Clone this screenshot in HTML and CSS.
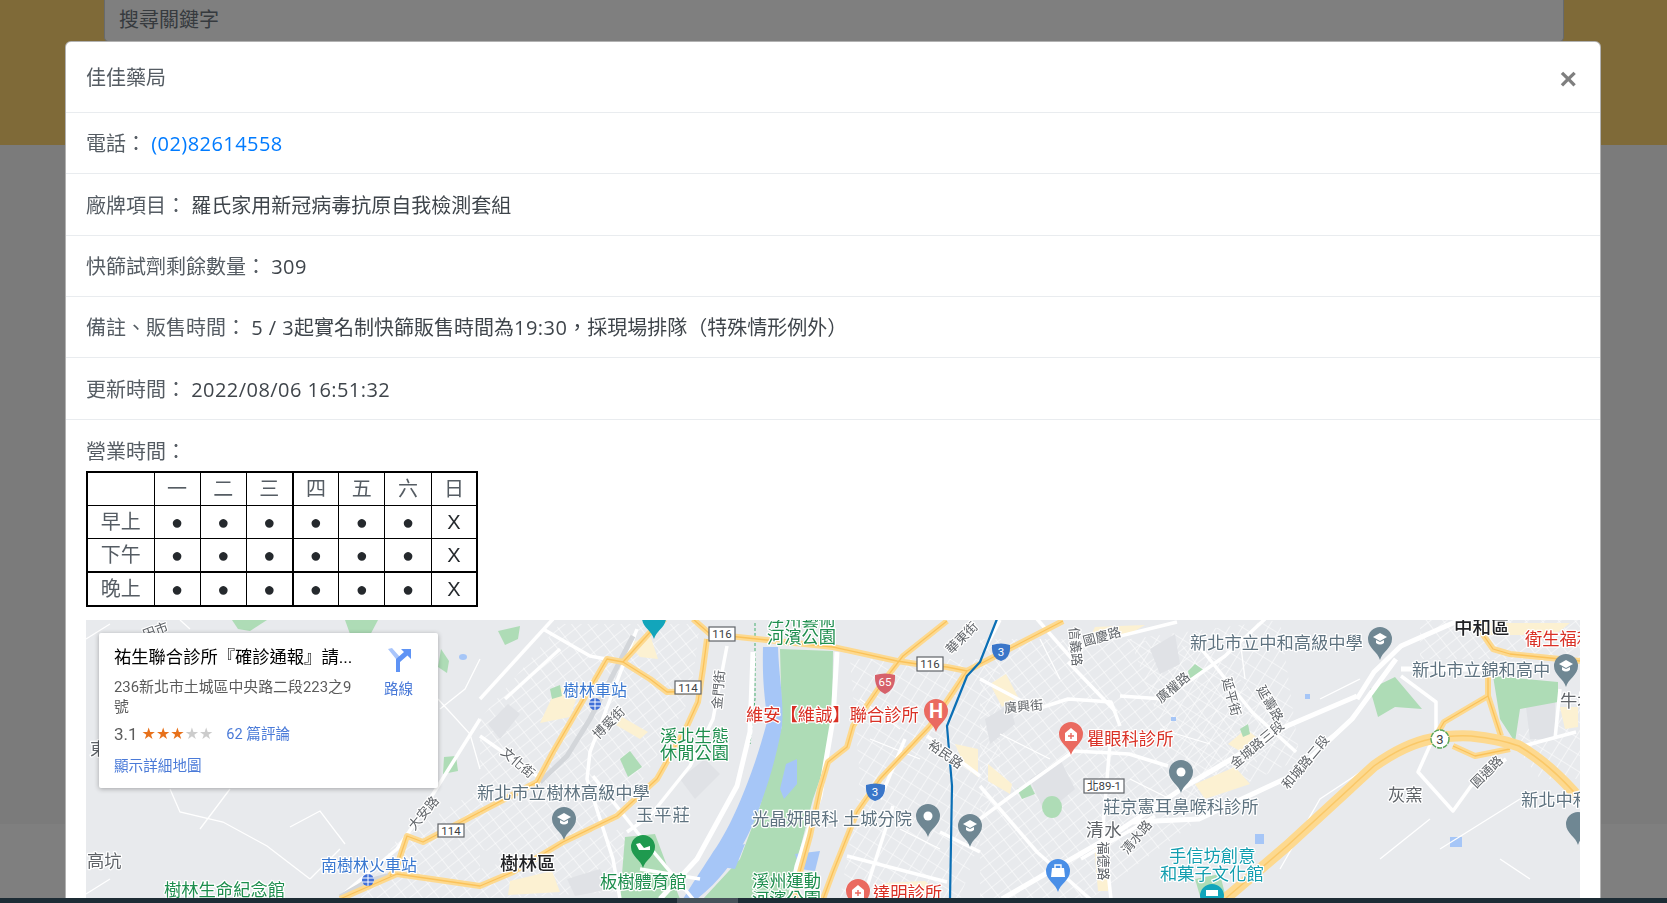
FILE: index.html
```html
<!DOCTYPE html>
<html lang="zh-Hant">
<head>
<meta charset="utf-8">
<title>佳佳藥局</title>
<link rel="stylesheet" href="styles.css">
</head>
<body>
<div class="page">
  <header class="top">
    <div class="search">搜尋關鍵字</div>
  </header>
  <main class="content"></main>
  <footer class="foot"></footer>
</div>
<div class="backdrop"></div>
<section class="modal">
  <div class="modal-head">
    <h5 class="modal-title">佳佳藥局</h5>
    <button class="close" type="button">×</button>
  </div>
  <div class="row">電話<span class="p">：</span> <a class="tel num" href="#">(02)82614558</a></div>
  <div class="row">廠牌項目<span class="p">：</span> <span class="val">羅氏家用新冠病毒抗原自我檢測套組</span></div>
  <div class="row">快篩試劑剩餘數量<span class="p">：</span> <span class="val num">309</span></div>
  <div class="row">備註<span class="p">、</span>販售時間<span class="p">：</span> <span class="val"><span class="num">5 / 3</span>起實名制快篩販售時間為<span class="num">19:30</span><span class="p">，</span>採現場排隊（特殊情形例外）</span></div>
  <div class="row">更新時間<span class="p">：</span> <span class="val num">2022/08/06 16:51:32</span></div>
  <div class="hours">
    <div class="hours-label">營業時間<span class="p">：</span></div>
    <table class="week">
      <colgroup><col class="c0"><col class="c"><col class="c"><col class="c"><col class="c"><col class="c"><col class="c"><col class="c"></colgroup>
      <tr><td></td><td>一</td><td>二</td><td>三</td><td>四</td><td>五</td><td>六</td><td>日</td></tr>
      <tr><td>早上</td><td class="d">●</td><td class="d">●</td><td class="d">●</td><td class="d">●</td><td class="d">●</td><td class="d">●</td><td class="d">X</td></tr>
      <tr><td>下午</td><td class="d">●</td><td class="d">●</td><td class="d">●</td><td class="d">●</td><td class="d">●</td><td class="d">●</td><td class="d">X</td></tr>
      <tr><td>晚上</td><td class="d">●</td><td class="d">●</td><td class="d">●</td><td class="d">●</td><td class="d">●</td><td class="d">●</td><td class="d">X</td></tr>
    </table>
    <div class="map">
      <svg class="map-svg" viewBox="86 621 1494 300" width="1494" height="300" xmlns="http://www.w3.org/2000/svg">
        <defs>
          <pattern id="grid" width="13" height="10" patternUnits="userSpaceOnUse" patternTransform="rotate(-38)">
            <path d="M0 0H13M0 0V10" stroke="#fff" stroke-width="1.1" fill="none"/>
          </pattern>
          <pattern id="gridb" width="11" height="14" patternUnits="userSpaceOnUse" patternTransform="rotate(32)">
            <path d="M0 0H11M0 0V14" stroke="#fff" stroke-width="1.1" fill="none"/>
          </pattern>
          <path id="pin" d="M0 21C-2 13-12 9-12 0A12 12 0 1 1 12 0C12 9 2 13 0 21Z"/>
          <g id="cap"><path d="M-7-2L0-6 7-2 0 2Z" fill="#fff"/><path d="M-4 1V4Q0 7 4 4V1L0 3Z" fill="#fff"/></g>
          <g id="arts">
            <path d="M693 620L710 635 757 640 833 648 897 662 917 665 947 668 967 672"/>
            <path d="M947 622L903 657 883 683 853 727 847 748 828 763 820 790 810 837 800 873 795 900"/>
            <path d="M1063 622L980 665 967 672 953 693 930 727 880 780 857 813 833 873 823 900"/>
            <path d="M707 640L703 670 698 703 687 727 657 780 617 817 563 843 513 873 480 887 397 875 340 900"/>
            <path d="M480 813L423 843 407 837 397 867 390 877"/>
            <path d="M480 813L537 783 553 753 607 660 623 663 650 680 667 693 700 692"/>
            <path d="M623 663L653 630 665 620"/>
            <path d="M1480 621L1484 637 1493 650 1510 655 1580 662"/>
            <path d="M1488 663L1488 697 1444 723 1436 737"/>
            <path d="M1488 697L1501 737"/>
            <path d="M1453 747L1475 757 1510 750"/>
          </g>
          <path id="fw" d="M1225 900L1287 847 1374 767Q1405 745 1431 740 1450 736 1471 737 1500 740 1519 747 1550 765 1580 800"/>
        </defs>
        <rect class="land" x="86" y="621" width="1494" height="300"/>

        <!-- neighbourhood blocks -->
        <path class="block" d="M480 720L560 625H700L690 700 620 820 520 860 480 850Z"/>
        <path class="block" d="M480 870L620 830 680 890 480 900Z"/>
        <path class="block2" d="M850 660H1000L1000 780 960 900H840L860 780Z"/>
        <path class="block" d="M980 640H1130L1210 650 1290 730 1200 820 1090 900H980Z"/>
        <path class="block2" d="M1130 640L1280 621 1300 760 1190 810Z"/>
        <path class="block" d="M1420 621H1580V660H1420Z"/>
        <path class="block2" d="M1510 740L1580 700V780H1540Z"/>
        <path class="block" d="M397 840L480 790V900H360Z"/>

        <!-- pale building / commerce zones -->
        <g class="commerce">
          <path d="M556 690L582 684 570 718 540 724Z"/>
          <path d="M628 645L650 636 658 660 640 658Z"/>
          <path d="M622 718L648 733 640 740 616 726Z"/>
          <path d="M955 745L978 750V778L965 768Z"/>
          <path d="M990 685L1006 675 1018 698 1002 708Z"/>
          <path d="M988 765L1012 785 1010 795 988 782Z"/>
          <path d="M1095 628L1145 626 1128 636 1090 638Z"/>
          <path d="M1195 785L1235 768 1250 785 1205 800Z"/>
          <path d="M1228 745L1246 730 1256 738 1240 752Z"/>
          <path d="M1094 845L1110 845 1108 892 1098 892Z"/>
          <path d="M1465 624L1570 624 1555 636 1480 636Z"/>
          <path d="M1560 708L1578 708V728L1565 730Z"/>
          <path d="M885 884L925 882 940 895H878Z"/>
          <path d="M510 882L552 872 560 893 508 896Z"/>
        </g>

        <!-- grey blocks -->
        <g class="greyblock">
          <path d="M488 725L508 705 520 715 500 740Z"/>
          <path d="M680 780L705 760 720 775 695 800Z"/>
          <path d="M985 720L1010 705 1015 725 990 745Z"/>
          <path d="M1150 650L1175 635 1180 665 1160 675Z"/>
          <path d="M1030 780L1060 760 1075 790 1045 815Z"/>
          <path d="M1525 700H1555V740H1530Z"/>
          <path d="M567 880L600 870 610 890 575 897Z"/>
        </g>

        <!-- parks -->
        <g class="park">
          <path d="M780 650L833 652 832 727 827 760 813 800 800 850 793 900H703L740 860 760 807 782 727Z"/>
          <path d="M232 621H267L250 632 238 630Z"/>
          <path d="M345 621H378L368 640 350 635Z"/>
          <path d="M441 650L449 662 447 674 438 668Z"/>
          <path d="M444 758L456 757 458 772 443 775Z"/>
          <path d="M498 632L520 627 518 640 505 646Z"/>
          <path d="M620 760L630 752 642 768 628 778Z"/>
          <path d="M550 690L560 686 562 697 552 700Z"/>
          <path d="M1370 690L1395 678 1422 710 1395 708 1378 718Z"/>
          <path d="M1493 677L1558 683 1558 703 1520 710 1515 743 1500 720Z"/>
          <ellipse cx="1052" cy="808" rx="10" ry="11"/>
          <path d="M1195 665L1205 672 1190 682 1188 672Z"/>
          <path d="M1240 730L1248 725 1250 735 1243 738Z"/>
          <path d="M1017 790L1030 785 1035 795 1022 800Z"/>
          <path d="M1195 880L1220 875 1225 895 1200 897Z"/>
          <path d="M625 838L655 835 672 880 680 900H620Z"/>
        </g>
        <path class="dash" d="M755 624V700L750 745"/>

        <!-- water -->
        <path class="water" d="M763 648H778C779 680 784 700 782 727 776 760 768 785 760 807 752 830 735 870 697 900H683C695 880 705 866 713 853 730 830 752 780 767 723 766 700 762 690 763 648Z"/>
        <g class="water">
          <path d="M786 765L797 760 797 785 784 800 780 790Z"/>
          <path d="M725 850L745 845 735 870 722 868Z"/>
          <path d="M795 855L820 852 815 872 800 870Z"/>
          <ellipse cx="463" cy="658" rx="4" ry="3"/>
          <rect x="1255" y="835" width="9" height="10"/>
          <rect x="1450" y="838" width="12" height="10"/>
          <rect x="1305" y="695" width="5" height="5"/>
          <rect x="1171" y="718" width="5" height="4"/>
        </g>

        <!-- minor roads (curves, hill tracks) -->
        <g class="thin">
          <path d="M170 790L180 813 223 823 267 847 310 880"/>
          <path d="M290 828L320 812 345 845"/>
          <path d="M440 710L465 690 480 660M438 700L470 735 480 770"/>
          <path d="M86 895L110 880M310 880L340 850"/>
          <path d="M1280 870L1320 800 1380 760M1440 850L1520 800M1380 860L1430 820M1500 860L1530 880"/>
          <path d="M86 640L110 625M180 621L190 630M230 790L200 830"/>
          <path d="M1320 700L1360 680M1300 760L1340 730"/>
          <path d="M1240 640L1245 680M1160 730L1210 745M1130 780L1170 800"/>
          <path d="M1040 640L1060 680M1000 735L1050 760"/>
          <path d="M860 700L900 730M870 740L920 760M900 830L940 850"/>
        </g>

        <!-- white roads -->
        <g class="road">
          <path d="M553 620L480 700"/>
          <path d="M480 720L413 827 397 850 340 898"/>
          <path d="M543 630L590 657 623 663"/>
          <path d="M727 647L713 720 690 767 650 817 627 833"/>
          <path d="M637 630L590 753 587 780 613 860 620 900"/>
          <path d="M480 737L537 777"/>
          <path d="M593 777L637 833 693 900"/>
          <path d="M927 737L980 777"/>
          <path d="M893 807L863 900"/>
          <path d="M940 833L980 853"/>
          <path d="M847 857L947 883"/>
          <path d="M980 680L1037 710 1068 700 1111 703 1120 727"/>
          <path d="M1068 663L1116 713"/>
          <path d="M1037 620L1072 660"/>
          <path d="M1074 752L1129 755 1168 767"/>
          <path d="M1074 752L1011 797 980 820"/>
          <path d="M1199 647L1252 713 1296 753"/>
          <path d="M1120 697L1164 700 1225 657 1265 620"/>
          <path d="M1068 650L1177 623"/>
          <path d="M1111 733L1103 827 1111 900"/>
          <path d="M980 787L1037 853 1090 900"/>
          <path d="M1081 860L1155 817"/>
          <path d="M1401 677L1436 703 1436 733 1418 773 1453 812 1471 787 1506 760"/>
          <path d="M1523 747L1576 733"/>
          <path d="M1560 690L1555 740"/>
          <path d="M905 740L880 800"/>
          <path d="M1000 621L985 650"/>
          <path d="M560 650L505 700"/>
          <path d="M640 870L700 880"/>
        </g>
        <g class="road wide">
          <path d="M753 653L750 733 737 787 697 860 660 900"/>
          <path d="M837 653L833 720 820 797 797 867 790 900"/>
          <path d="M1357 697L1287 727 1186 787 1111 837 1002 900"/>
          <path d="M1396 660L1352 720 1291 777 1199 820 1133 823"/>
          <path d="M1462 620L1401 647 1374 673 1357 700"/>
          <path d="M1401 670L1488 670"/>
        </g>
        <path class="rail" d="M633 637L590 720 567 757 540 783"/>
        <path class="rail" d="M340 898L368 882 395 875"/>

        <!-- arterials -->
        <use class="art-base" href="#arts"/>
        <use class="art-core" href="#arts"/>
        <use class="fw-base" href="#fw"/>
        <use class="fw-core" href="#fw"/>

        <path class="metro" d="M997 620L980 663 967 677 947 727 952 787 950 900"/>

        <!-- shields -->
        <g class="shield">
          <rect x="709" y="628" width="26" height="14"/><text x="722" y="639">116</text>
          <rect x="917" y="658" width="26" height="14"/><text x="930" y="669">116</text>
          <rect x="675" y="682" width="26" height="13"/><text x="688" y="693">114</text>
          <rect x="438" y="825" width="26" height="13"/><text x="451" y="836">114</text>
          <rect x="1084" y="780" width="40" height="14"/><text x="1104" y="791">北89-1</text>
        </g>
        <g class="badge">
          <path d="M875 676Q885 673 895 676 896 690 885 695 874 690 875 676Z" fill="#d6616b"/><text x="885" y="687">65</text>
          <path d="M866 786Q875 783 885 786 886 799 875 802 865 799 866 786Z" fill="#3a76c9"/><text x="875" y="797">3</text>
          <path d="M992 646Q1001 643 1010 646 1011 659 1001 662 991 659 992 646Z" fill="#3a76c9"/><text x="1001" y="657">3</text>
          <circle cx="1440" cy="740" r="9" class="flower"/><text x="1440" y="745" class="dark">3</text>
        </g>

        <!-- station marks -->
        <g class="station">
          <circle cx="595" cy="705" r="6"/><path d="M589 703H601M589 707H601M595 699V711"/>
          <circle cx="368" cy="881" r="6"/><path d="M362 879H374M362 883H374M368 875V887"/>
        </g>

        <!-- pins -->
        <g transform="translate(654 619)" fill="#12a5bb"><use href="#pin"/></g>
        <g transform="translate(936 712)"><use href="#pin" fill="#ea6a60"/><text x="0" y="7" class="pin-h">H</text></g>
        <g transform="translate(564 820)"><use href="#pin" fill="#6f8793"/><use href="#cap"/></g>
        <g transform="translate(970 827)"><use href="#pin" fill="#6f8793"/><use href="#cap"/></g>
        <g transform="translate(1380 640)"><use href="#pin" fill="#6f8793"/><use href="#cap"/></g>
        <g transform="translate(1566 667)"><use href="#pin" fill="#6f8793"/><use href="#cap"/></g>
        <g transform="translate(928 817)"><use href="#pin" fill="#6f8793"/><circle r="4.5" fill="#fff"/></g>
        <g transform="translate(1181 773)"><use href="#pin" fill="#6f8793"/><circle r="4.5" fill="#fff"/></g>
        <g transform="translate(643 848)"><use href="#pin" fill="#1f9a4f"/><path d="M-7-3L-4 3H7V-1L1 1-3-4Z" fill="#fff"/></g>
        <g transform="translate(858 892)"><use href="#pin" fill="#ea6a60"/><path d="M-6-1L0-6 6-1V7H-6Z" fill="#fff"/><path d="M-3 2H3M0-1V5" stroke="#ea6a60" stroke-width="1.4"/></g>
        <g transform="translate(1071 735)"><use href="#pin" fill="#ea6a60"/><path d="M-6-1L0-6 6-1V7H-6Z" fill="#fff"/><path d="M-3 2H3M0-1V5" stroke="#ea6a60" stroke-width="1.4"/></g>
        <g transform="translate(1058 872)"><use href="#pin" fill="#4a8fe7"/><path d="M-6-3H6L7 6H-7Z" fill="#fff"/><path d="M-3-3V-6H3V-3" stroke="#fff" fill="none" stroke-width="1.4"/></g>
        <g transform="translate(1212 897)" fill="#12a5bb"><use href="#pin"/><rect x="-6" y="-6" width="12" height="6" fill="#fff"/></g>
        <g transform="translate(1578 825)"><use href="#pin" fill="#6f8793"/></g>

        <!-- labels -->
        <g class="lb">
          <text class="blue" x="563" y="697">樹林車站</text>
          <text class="blue" x="321" y="872">南樹林火車站</text>
          <text class="green" x="660" y="743">溪北生態</text>
          <text class="green" x="660" y="760">休閒公園</text>
          <text class="green" x="767" y="627">浮州藝術</text>
          <text class="green" x="767" y="644">河濱公園</text>
          <text class="green" x="600" y="889">板樹體育館</text>
          <text class="green" x="752" y="888">溪州運動</text>
          <text class="green" x="752" y="906">河濱公園</text>
          <text class="green" x="164" y="897">樹林生命紀念館</text>
          <text class="grey" x="477" y="800">新北市立樹林高級中學</text>
          <text class="grey" x="636" y="822" letter-spacing="1">玉平莊</text>
          <text class="grey" x="752" y="826">光晶妍眼科</text>
          <text class="grey" x="843" y="826">土城分院</text>
          <text class="grey" x="1190" y="650">新北市立中和高級中學</text>
          <text class="grey" x="1412" y="677">新北市立錦和高中</text>
          <text class="grey" x="1103" y="814">莊京憲耳鼻喉科診所</text>
          <text class="grey" x="1521" y="807">新北中和</text>
          <text class="place" x="87" y="868">高坑</text>
          <text class="place" x="90" y="756">東</text>
          <text class="place" x="1086" y="837" letter-spacing="1">清水</text>
          <text class="place" x="1388" y="802">灰窯</text>
          <text class="place" x="1560" y="708">牛埔</text>
          <text class="dist" x="500" y="871">樹林區</text>
          <text class="dist" x="1454" y="635">中和區</text>
          <text class="red" x="746" y="722">維安【維誠】聯合診所</text>
          <text class="red" x="1087" y="746">瞿眼科診所</text>
          <text class="red" x="873" y="900">達明診所</text>
          <text class="red" x="1525" y="646">衛生福利</text>
          <text class="teal" x="1169" y="863">手信坊創意</text>
          <text class="teal" x="1160" y="881">和菓子文化館</text>
        </g>
        <g class="st">
          <text transform="translate(157 636) rotate(-20)">田市</text>
          <text transform="translate(515 767) rotate(40)">文化街</text>
          <text transform="translate(723 691) rotate(-85)">金門街</text>
          <text transform="translate(612 727) rotate(-45)">博愛街</text>
          <text transform="translate(943 759) rotate(35)">裕民路</text>
          <text transform="translate(965 642) rotate(-45)">華東街</text>
          <text transform="translate(427 817) rotate(-50)">大安路</text>
          <text transform="translate(1103 642) rotate(-15)">國慶路</text>
          <text transform="translate(1071 648) rotate(85)">信義路</text>
          <text transform="translate(1024 712) rotate(-5)">廣興街</text>
          <text transform="translate(1176 692) rotate(-40)">廣權路</text>
          <text transform="translate(1227 699) rotate(75)">延平街</text>
          <text transform="translate(1266 707) rotate(60)">延壽路</text>
          <text transform="translate(1260 749) rotate(-40)">金城路三段</text>
          <text transform="translate(1309 766) rotate(-50)">和城路二段</text>
          <text transform="translate(1490 776) rotate(-45)">圓通路</text>
          <text transform="translate(1140 841) rotate(-50)">清水路</text>
          <text transform="translate(1099 862) rotate(90)">福德路</text>
        </g>
      </svg>

      <div class="card">
        <div class="card-main">
          <div class="card-title">祐生聯合診所『確診通報』請...</div>
          <div class="card-addr">236新北市土城區中央路二段223之9號</div>
          <div class="card-rate">
            <span class="score">3.1</span>
            <span class="stars">★★★<span class="off">★★</span></span>
            <a class="gl rev" href="#">62 篇評論</a>
          </div>
          <a class="gl more" href="#">顯示詳細地圖</a>
        </div>
        <div class="dir">
          <svg class="dir-ico" viewBox="0 0 24 24" width="24" height="24" xmlns="http://www.w3.org/2000/svg">
            <path d="M1 1L5 0 13 9V24H9V11Z" fill="#a9c5fb"/>
            <path d="M9 24V11L17 4 14 1H24V11L20.500 7.500 13 14V24Z" fill="#5e93f5"/>
          </svg>
          <span class="gl dir-t">路線</span>
        </div>
      </div>
    </div>
  </div>
</section>
<div class="strip"><span class="strip-thumb"></span></div>
</body>
</html>
```
FILE: styles.css
```css
* { box-sizing: border-box; }
html, body { margin: 0; height: 100%; overflow: hidden; }
body { font-family: "Open Sans", "Noto Sans CJK TC", sans-serif; color: #212529; background: #fff; }

.page { height: 100vh; display: flex; flex-direction: column; }
.top { height: 145px; flex: none; background: #ffd470; padding: 0 103px 0 104px; }
.search { height: 42px; background: #fff; border: 1px solid #ced4da; border-top: 0; border-radius: 0 0 5px 5px; padding: 5px 14px; font-size: 20px; line-height: 30px; color: #6c757d; }
.content { flex: 1; background: #f7f7f7; }
.foot { height: 79px; flex: none; background: #fff; }

.backdrop { position: fixed; inset: 0; background: rgba(0,0,0,.5); }

.modal { position: fixed; top: 41px; left: 65px; width: 1536px; background: #fff; border: 1px solid rgba(0,0,0,.3); border-radius: 6px; font-size: 20px; line-height: 30px; }
.modal-head { display: flex; justify-content: space-between; align-items: center; height: 71px; padding: 1px 20px 0; border-bottom: 1px solid #e9ecef; }
.modal-title { margin: 0; font-size: 20px; font-weight: 400; line-height: 30px; color: #555c63; }
.close { border: 0; background: none; padding: 0; margin: 3px 3px 0 0; font: 700 30px/30px "Liberation Sans", sans-serif; color: #7f7f7f; }

.row { height: 61.33px; padding: 15.200px 20px 0; border-bottom: 1px solid #e9ecef; color: #555c63; white-space: nowrap; }
.p { font-family: "Noto Sans CJK SC", sans-serif; }
.num { letter-spacing: .45px; }
.tel { color: #007bff; text-decoration: none; }
.val { color: #3f454b; }

.hours { padding: 16px 20px 0; color: #555c63; }
.hours-label { height: 35px; }
.week { border-collapse: collapse; table-layout: fixed; width: 391px; border: 2px solid #000; }
.c0 { width: 67px; }
.c { width: 46.200px; }
.week td { height: 33.600px; padding: 0; border: 1px solid #000; text-align: center; line-height: 24px; color: #555c63; font-family: "Liberation Sans", "Noto Sans CJK TC", sans-serif; }
.week td.d { color: #25292d; }
.week td:nth-child(5) { border-left-width: 2px; }
.week tr:nth-child(4) td { border-top-width: 2px; }

.map { position: relative; margin-top: 13px; height: 300px; overflow: hidden; font-family: Roboto, "Noto Sans CJK TC", sans-serif; }
.map-svg { display: block; }
.land { fill: #e8eaed; }
.block { fill: url(#grid); }
.block2 { fill: url(#gridb); }
.commerce path { fill: #fcf1d2; }
.greyblock path { fill: #e0e2e6; }
.park path, .park ellipse { fill: #aedcb6; }
.dash { fill: none; stroke: #46b06e; stroke-width: 1; stroke-dasharray: 3 2; }
.water, .water path, .water ellipse, .water rect { fill: #a6c6f7; }
.thin path { fill: none; stroke: #fff; stroke-width: 1.3; }
.road path { fill: none; stroke: #fff; stroke-width: 3.500; stroke-linejoin: round; }
.road.wide path { stroke-width: 5; }
.rail { fill: none; stroke: #d3d6da; stroke-width: 5; }
.art-base { fill: none; stroke: #fdd98f; stroke-width: 6; stroke-linejoin: round; }
.art-core { fill: none; stroke: #fac25a; stroke-width: 1.300px; stroke-linejoin: round; }
.fw-base { fill: none; stroke: #fdd98f; stroke-width: 11; stroke-linejoin: round; }
.fw-core { fill: none; stroke: #fac868; stroke-width: 1.500; stroke-linejoin: round; }
.metro { fill: none; stroke: #0b6fb5; stroke-width: 2.200; stroke-linejoin: round; }

.shield rect { fill: #fff; stroke: #5f6368; stroke-width: 1.2; }
.shield text { font-size: 11.500px; text-anchor: middle; fill: #3c4043; }
.badge text { font-size: 11.500px; text-anchor: middle; fill: #fff; }
.badge text.dark { fill: #3c4043; font-size: 13px; }
.flower { fill: #fff; stroke: #5ba85b; stroke-width: 1.4; stroke-dasharray: 5 1; }
.station circle { fill: #3f6fd8; }
.station path { stroke: #fff; stroke-width: 1; fill: none; }
.pin-h { font-size: 20px; font-weight: 700; text-anchor: middle; fill: #fff; }

.lb text { font-size: 17.300px; paint-order: stroke; stroke: #fff; stroke-width: 2.500px; stroke-linejoin: round; }
.lb .blue { fill: #3a78d0; font-size: 16px; }
.lb .green { fill: #1e8e4e; }
.lb .grey { fill: #5f7380; }
.lb .place { fill: #5f6368; }
.lb .dist { fill: #202124; font-size: 18.500px; font-weight: 500; }
.lb .red { fill: #d93025; }
.lb .teal { fill: #129eaf; }
.st text { font-size: 13px; text-anchor: middle; fill: #5f6368; paint-order: stroke; stroke: #fff; stroke-width: 2.500px; stroke-linejoin: round; }

.card { position: absolute; left: 13px; top: 13px; width: 339px; height: 155px; background: #fff; border-radius: 2px; box-shadow: 0 1px 5px rgba(0,0,0,.3); padding: 13px 15px; display: flex; }
.card-main { width: 245px; flex: none; }
.card-title { font-size: 17.300px; line-height: 22px; color: #000; white-space: nowrap; }
.card-addr { margin-top: 9px; font-size: 14.900px; line-height: 20px; color: #5b5b5b; }
.card-rate { margin-top: 5px; display: flex; align-items: center; height: 24px; }
.score { font-size: 17px; color: #5b5b5b; }
.stars { margin-left: 4px; font: 16px/24px "DejaVu Sans", sans-serif; color: #e7711b; }
.off { color: #ccc; }
.gl { color: #4a7ad8; text-decoration: none; font-size: 14.600px; line-height: 20px; }
.rev { margin-left: 13px; }
.more { display: block; margin-top: 10px; }
.dir { margin-left: 15px; width: 50px; display: flex; flex-direction: column; align-items: center; padding-top: 2px; }
.dir-ico { display: block; margin-bottom: 7px; }
.dir-t { display: block; }

.strip { position: fixed; left: 0; right: 0; bottom: 0; height: 5px; background: #1d2c35; }
.strip-thumb { position: absolute; left: 677px; top: 0; width: 61px; height: 5px; background: #46525a; }
```
